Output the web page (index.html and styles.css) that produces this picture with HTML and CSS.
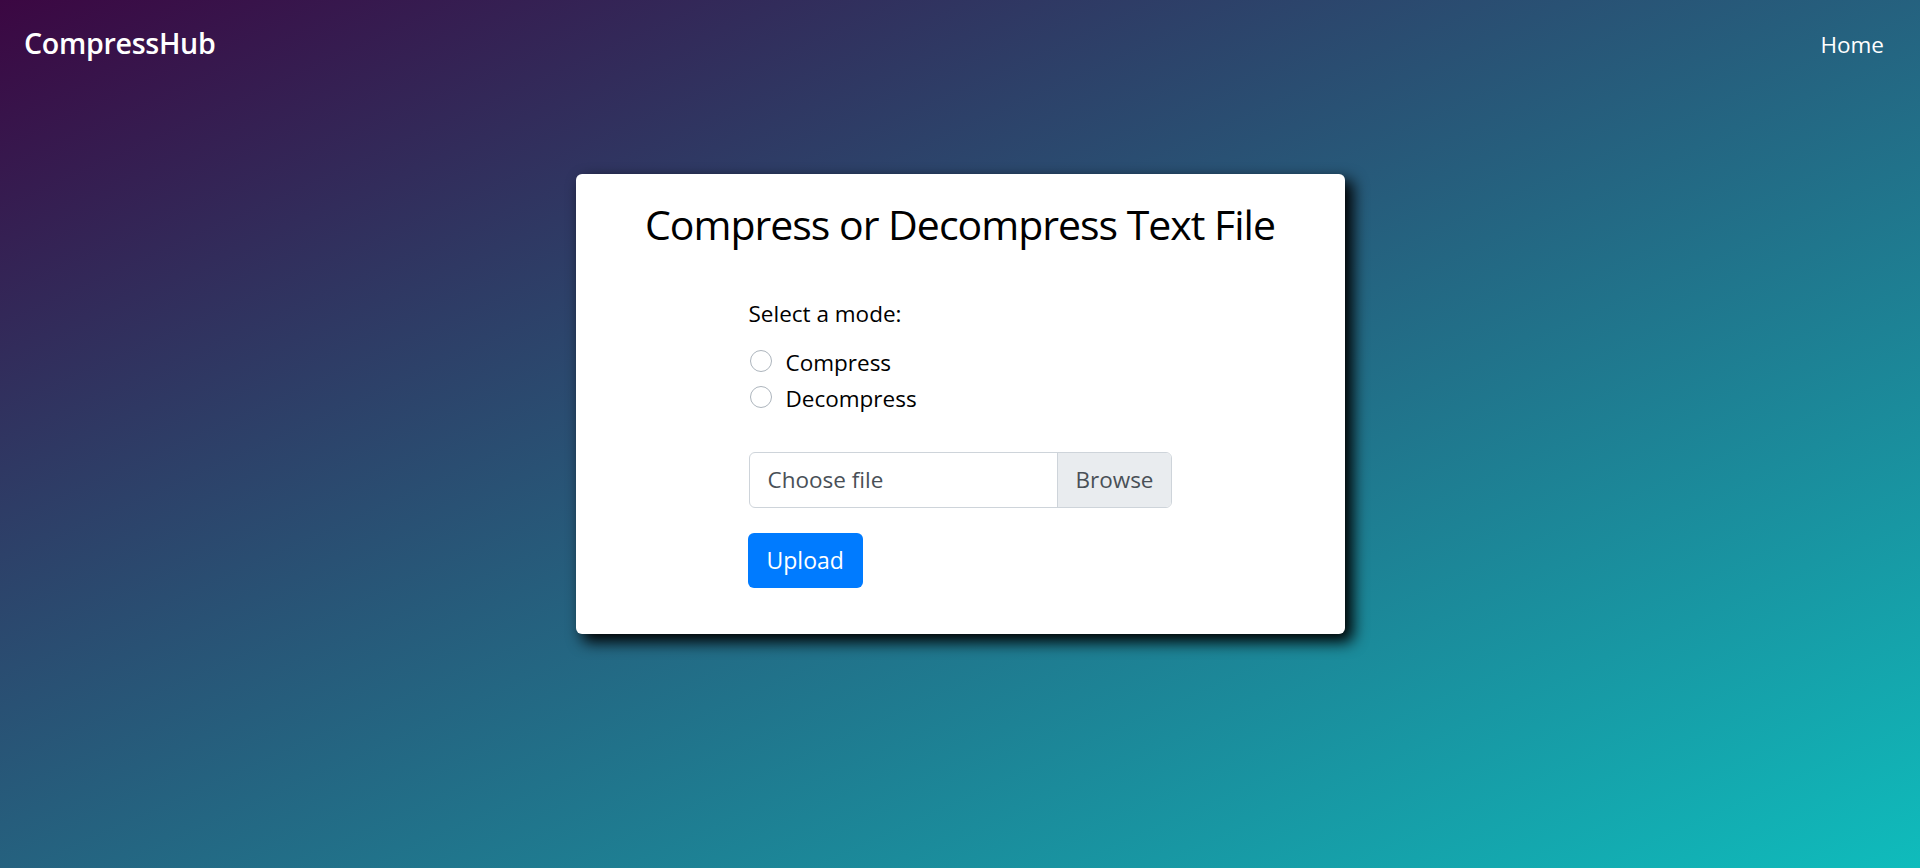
FILE: index.html
```html
<!DOCTYPE html>
<html lang="en">
<head>
<meta charset="utf-8">
<title>CompressHub</title>
<link rel="stylesheet" href="styles.css">
</head>
<body>
<nav class="navbar">
  <a class="brand" href="#">CompressHub</a>
  <a class="nav-link" href="#">Home</a>
</nav>
<main class="page">
  <section class="card">
    <h2 class="card-title">Compress or Decompress Text File</h2>
    <form class="mode-form">
      <p class="form-label">Select a mode:</p>
      <label class="radio"><span class="radio-dot"></span><span class="radio-text">Compress</span></label>
      <label class="radio"><span class="radio-dot"></span><span class="radio-text">Decompress</span></label>
      <div class="file-input">
        <span class="file-label">Choose file</span>
        <span class="file-browse">Browse</span>
      </div>
      <button type="button" class="btn-upload">Upload</button>
    </form>
  </section>
</main>
</body>
</html>
```
FILE: styles.css
```css
html, body {
  margin: 0;
  padding: 0;
}
body {
  min-height: 868px;
  font-family: "Open Sans", "Noto Sans", sans-serif;
  background: linear-gradient(to bottom right, #3b0742 0%, #0fbcbc 100%);
  color: #000;
}
.navbar {
  display: flex;
  justify-content: space-between;
  align-items: center;
  padding: 12px 24px;
}
.brand {
  color: #fff;
  text-decoration: none;
  font-size: 28.6px;
  font-weight: 600;
  line-height: 45px;
  padding: 7.5px 0;
  letter-spacing: -0.3px;
}
.nav-link {
  color: #fff;
  text-decoration: none;
  font-size: 22.5px;
  line-height: 36px;
  padding: 15px 12px 9px;
}
.page {
  display: flex;
  justify-content: center;
  padding-top: 90px;
}
.card {
  width: 769px;
  box-sizing: border-box;
  background: #fff;
  border-radius: 6px;
  box-shadow: 7px 7px 15px 1px #000;
  padding: 22px 0 46px;
}
.card-title {
  margin: 0;
  text-align: center;
  font-size: 41px;
  font-weight: 400;
  line-height: 57.6px;
  letter-spacing: -1px;
  color: #000;
}
.mode-form {
  width: 423px;
  margin: 42px auto 0;
}
.form-label {
  margin: 0 0 13px;
  font-size: 22.5px;
  line-height: 36px;
}
.radio {
  display: flex;
  align-items: flex-start;
  font-size: 22.5px;
  line-height: 36px;
}
.radio-dot {
  width: 22px;
  height: 22px;
  box-sizing: border-box;
  border: 1.5px solid #adb5bd;
  border-radius: 50%;
  margin: 5px 14px 0 1px;
  background: #fff;
}
.file-input {
  display: flex;
  height: 56px;
  margin-top: 35px;
  border: 1.5px solid #ced4da;
  border-radius: 6px;
  box-sizing: border-box;
  overflow: hidden;
  font-size: 22.5px;
  color: #495057;
}
.file-label {
  flex: 1;
  display: flex;
  align-items: center;
  padding-left: 18px;
}
.file-browse {
  display: flex;
  align-items: center;
  padding: 0 17px;
  background: #e9ecef;
  border-left: 1.5px solid #ced4da;
}
.btn-upload {
  display: block;
  margin: 25px 0 0 -1px;
  height: 55px;
  padding: 0 19px;
  border: none;
  border-radius: 6px;
  background: #007bff;
  color: #fff;
  font-family: inherit;
  font-size: 23px;
}
```
